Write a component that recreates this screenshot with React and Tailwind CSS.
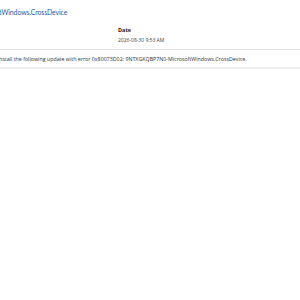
export default function App() {
  return (
    <div className="w-[300px] h-[300px] bg-white overflow-hidden" style={{ fontFamily: '"Open Sans", "Noto Sans", sans-serif' }}>
      <div className="-ml-[1px] pt-[6px]">
        <h1 className="text-[7px] leading-[12px] text-[#1f5fa8] whitespace-nowrap tracking-[-0.15px]" style={{ fontFamily: 'Lato, sans-serif' }}>tWindows.CrossDevice</h1>
      </div>
      <div className="flex pl-[118px] pt-[8px]">
        <div className="flex flex-col">
          <span className="text-[5.5px] leading-[8px] font-bold text-[#222]">Date</span>
          <span className="text-[5px] leading-[8px] mt-[2px] text-[#444]">2026-08-30 9:53 AM</span>
        </div>
      </div>
      <div className="mt-[5px] border-t border-[#e2e2e2] border-b-2 border-b-[#f0f0f0] h-[20px] flex items-center -ml-[1px]">
        <p className="text-[5.3px] leading-[8px] text-[#333] whitespace-nowrap">
          nstall the following update with error 0x80073D02: 9NTXGKQBP7N0-MicrosoftWindows.CrossDevice.
        </p>
      </div>
    </div>
  );
}
